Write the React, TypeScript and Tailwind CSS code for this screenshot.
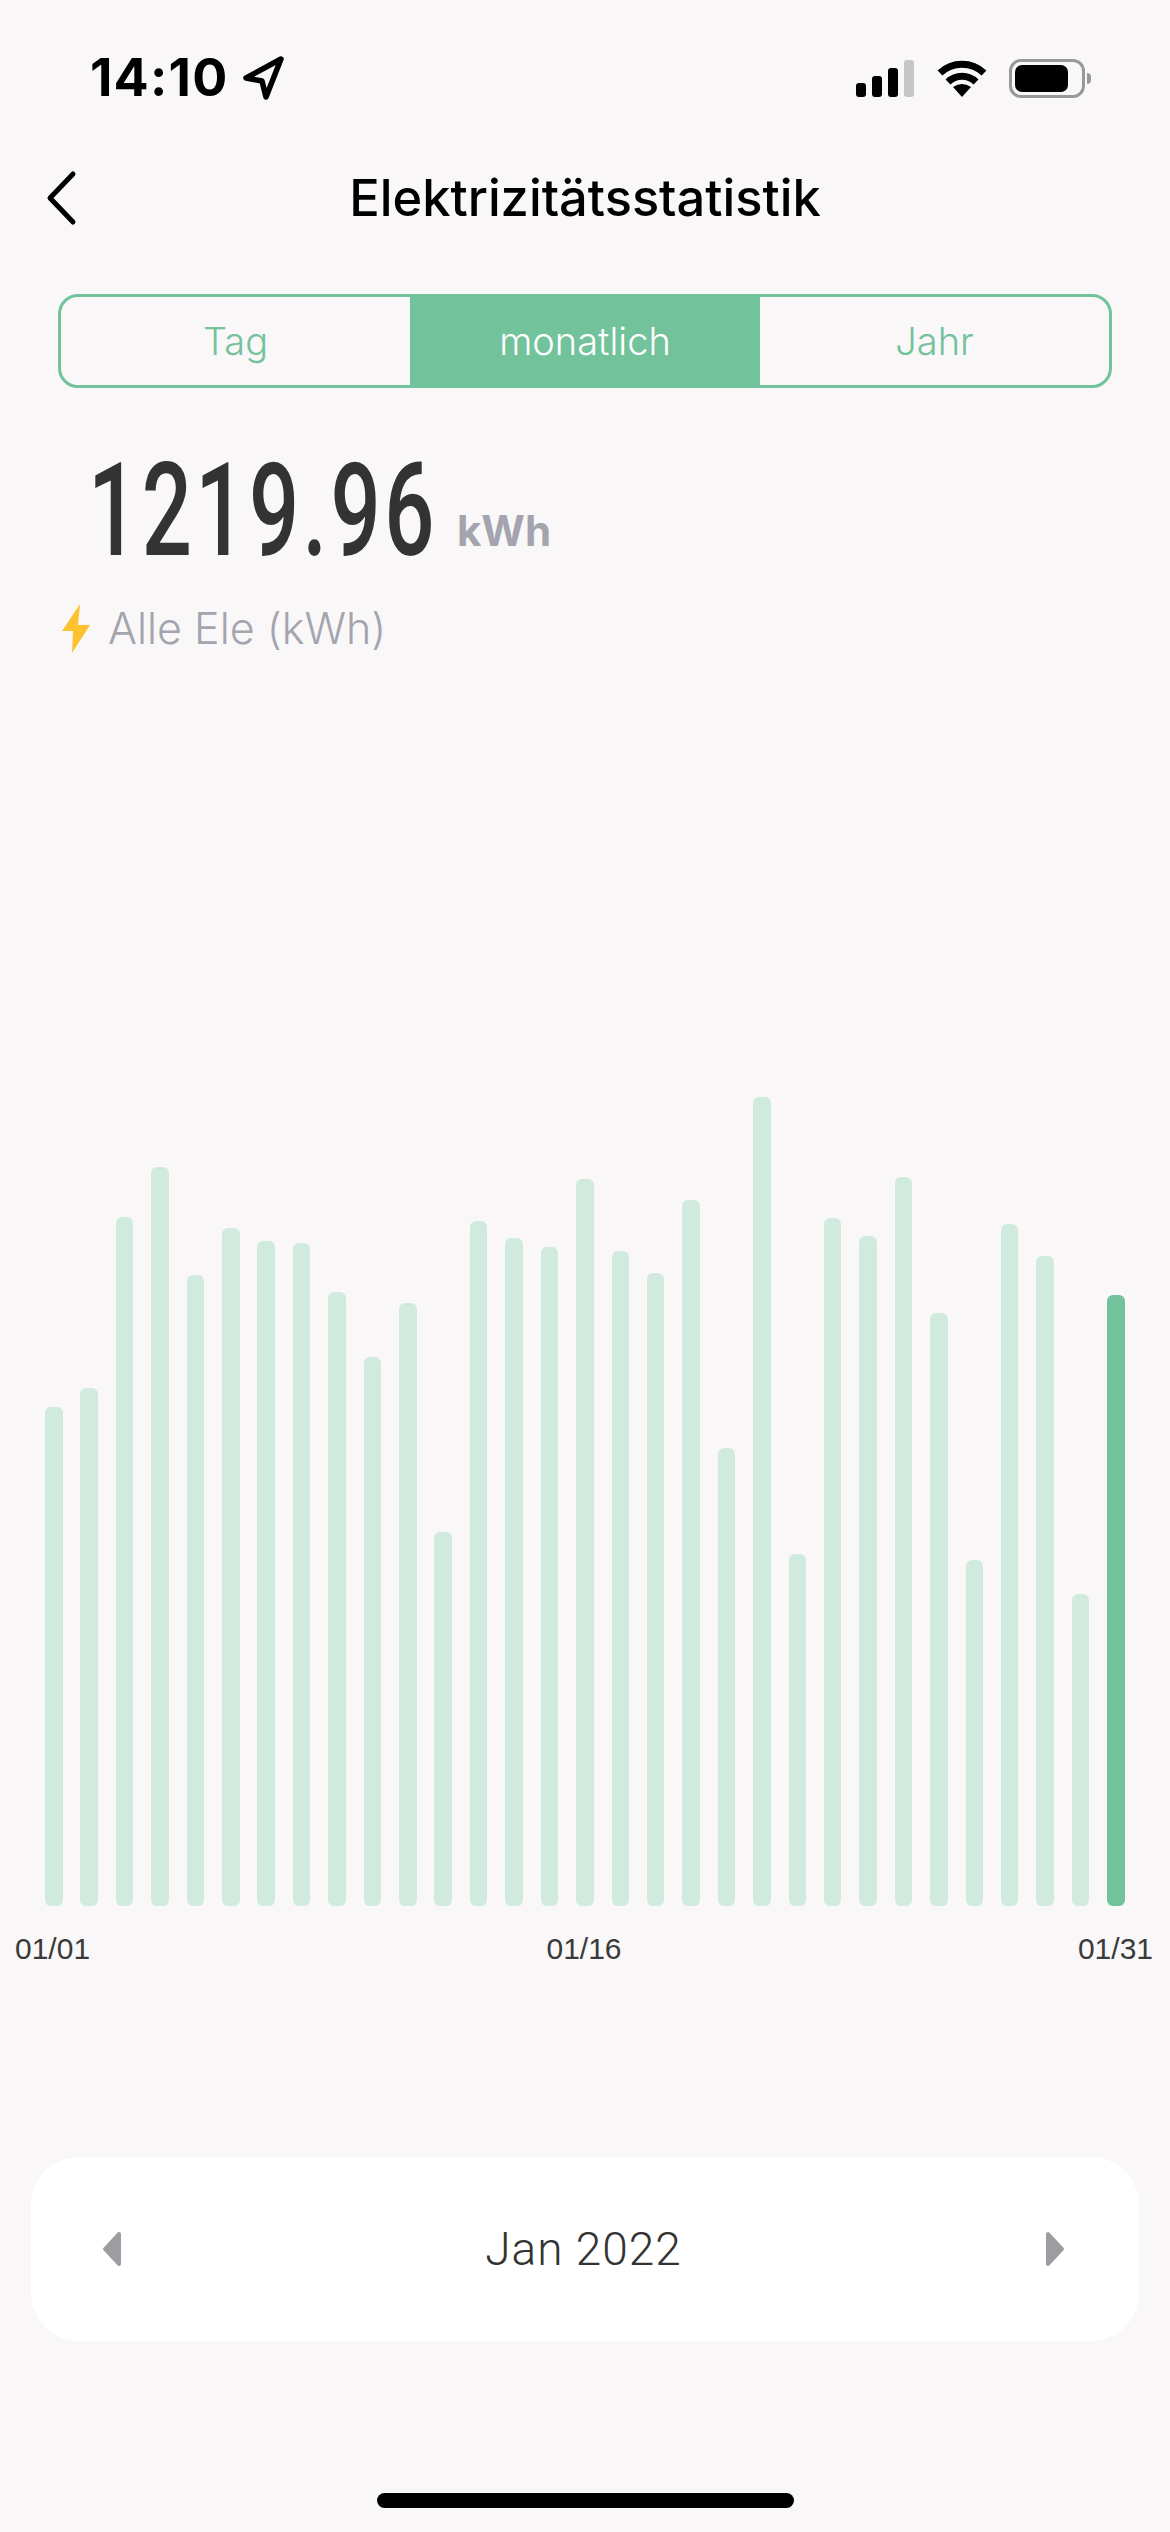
// top edge of every bar, in page pixels
const BASELINE = 1906;
const barTops = [
  1407, 1388, 1217, 1167, 1275, 1228, 1241, 1243, 1292, 1357, 1303, 1532, 1221, 1238, 1247, 1179,
  1251, 1273, 1200, 1448, 1097, 1554, 1218, 1236, 1177, 1313, 1560, 1224, 1256, 1594, 1295,
];

function StatusBar() {
  return (
    <div className="flex h-[40px] items-center justify-between pl-[90px] pr-[79px] mt-[58px]">
      <div className="flex items-center gap-[12px]">
        <span className="text-[52px] font-bold leading-none tracking-[1.2px] text-black font-['Inter',sans-serif]">14:10</span>
        <svg width="46" height="46" viewBox="0 0 46 46" fill="none">
          <path d="M41 4 L6 23 L22 26 L26 42 Z" stroke="#000" strokeWidth="5.5" strokeLinejoin="round" />
        </svg>
      </div>
      <div className="flex items-center">
        <div className="flex items-end gap-[6px] h-[37px]">
          <div className="w-[10px] h-[14px] rounded-[3px] bg-black" />
          <div className="w-[10px] h-[21px] rounded-[3px] bg-black" />
          <div className="w-[10px] h-[29px] rounded-[3px] bg-black" />
          <div className="w-[10px] h-[37px] rounded-[3px] bg-[#c6c6c6]" />
        </div>
        <svg className="ml-[23px]" width="50" height="37" viewBox="0 0 50 37" fill="none">
          <path d="M3 13 A32 32 0 0 1 47 13" stroke="#000" strokeWidth="7" />
          <path d="M11 22 A20 20 0 0 1 39 22" stroke="#000" strokeWidth="7" />
          <path d="M25 37 L16 27 Q25 21 34 27 Z" fill="#000" />
        </svg>
        <div className="ml-[22px] flex items-center gap-[2px]">
          <div className="flex h-[39px] w-[76px] items-center justify-start rounded-[12px] border-[3px] border-[#999999] pl-[3px]">
            <div className="h-[27px] w-[53px] rounded-[7px] bg-black" />
          </div>
          <div className="h-[11px] w-[4px] rounded-r-full bg-[#999999]" />
        </div>
      </div>
    </div>
  );
}

function Segments() {
  return (
    <div className="mx-[58px] mt-[66px] flex h-[94px] overflow-hidden rounded-[20px] border-[3px] border-[#72c29b] text-[38px] font-light font-['Inter',sans-serif]">
      <div className="flex flex-1 items-center justify-center text-[#72c29b]">Tag</div>
      <div className="flex w-[350px] items-center justify-center bg-[#72c29b] text-white">monatlich</div>
      <div className="flex flex-1 items-center justify-center text-[#72c29b]">Jahr</div>
    </div>
  );
}

function Triangle({ flip }: { flip?: boolean }) {
  return (
    <svg width="20" height="36" viewBox="0 0 20 36" className={flip ? "rotate-180" : ""}>
      <path d="M17 3 L3 18 L17 33 Z" fill="#9c9da1" stroke="#9c9da1" strokeWidth="4" strokeLinejoin="round" />
    </svg>
  );
}

export default function App() {
  return (
    <div className="flex h-[2532px] w-[1170px] flex-col overflow-hidden bg-[#f9f7f8]">
      <StatusBar />

      {/* Header */}
      <div className="mt-[70px] grid h-[60px] grid-cols-[1fr_auto_1fr] items-center">
        <svg className="ml-[46px]" width="32" height="56" viewBox="0 0 32 56" fill="none">
          <path d="M27 4 L4 28 L27 52" stroke="#000" strokeWidth="5" strokeLinecap="round" strokeLinejoin="round" />
        </svg>
        <h1 className="text-[50.6px] font-medium leading-none text-black font-['Inter',sans-serif]">Elektrizitätsstatistik</h1>
      </div>

      <Segments />

      {/* Total */}
      <div className="mt-[58px] flex h-[130px] items-end pl-[88px]">
        <div className="w-[369px] shrink-0">
          <span className="inline-block origin-left scale-x-[0.68] whitespace-nowrap text-[130px] font-medium leading-[130px] tracking-[5px] text-[#333333] font-['Roboto',sans-serif]">
            1219.96
          </span>
        </div>
        <span className="mb-[24px] text-[42px] font-bold leading-none text-[#a3a4ae] font-['Inter',sans-serif]">kWh</span>
      </div>
      <div className="mt-[27px] flex h-[50px] items-center pl-[62px]">
        <svg width="28" height="49" viewBox="0 0 28 49">
          <path d="M18 0 L0 27 L11 27 L10 49 L28 21 L16 21 Z" fill="#fdc22f" />
        </svg>
        <span className="ml-[18px] text-[43px] font-light leading-none text-[#a3a4ae] font-['Inter',sans-serif]">Alle Ele (kWh)</span>
      </div>

      {/* Chart */}
      <div className="mt-[443px] flex h-[810px] items-end justify-between pl-[45px] pr-[45px]">
        {barTops.map((top, i) => (
          <div
            key={i}
            className={`w-[17.5px] rounded-[6px] ${i === 30 ? "bg-[#72c29b]" : "bg-[#d0eade]"}`}
            style={{ height: BASELINE - top }}
          />
        ))}
      </div>
      <div className="mt-[26px] grid grid-cols-[1fr_auto_1fr] items-center pl-[15px] pr-[17px] text-[30px] leading-[34px] text-[#3a3a3a] font-['Liberation_Sans',sans-serif]">
        <span>01/01</span>
        <span>01/16</span>
        <span className="text-right">01/31</span>
      </div>

      {/* Month picker */}
      <div className="mx-[31px] mt-[191px] flex h-[184px] items-center justify-between rounded-[48px] bg-white pl-[71px] pr-[74px]">
        <Triangle />
        <span className="text-[46px] font-light leading-none tracking-[1px] text-[#333333] font-['Roboto',sans-serif]">Jan 2022</span>
        <Triangle flip />
      </div>

      {/* Home indicator */}
      <div className="mx-auto mt-[152px] h-[15px] w-[417px] rounded-full bg-black" />
    </div>
  );
}
